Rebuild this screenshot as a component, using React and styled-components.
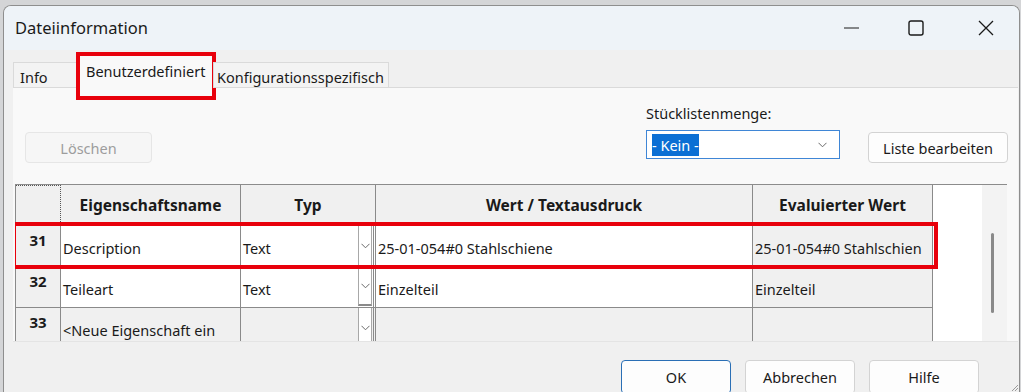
import React from 'react';
import styled, { createGlobalStyle } from 'styled-components';

const GlobalStyle = createGlobalStyle`
  html, body {
    margin: 0;
    padding: 0;
    width: 1021px;
    height: 392px;
    overflow: hidden;
    background: #d4d5d7;
    font-family: "Noto Sans", "Open Sans", sans-serif;
    color: #1a1a1a;
  }
`;

const COLS = [45, 180, 135, 377, 180];
const RED = '#e8000b';
const LINE = '#8a8a8a';

const Screen = styled.div`
  display: flex;
  flex-direction: column;
  width: 1021px;
  height: 392px;
  padding-top: 5px;
  box-sizing: border-box;
`;

const Dialog = styled.div`
  position: relative;
  margin-left: 3px;
  width: 1015px;
  flex: 1;
  border: 1px solid #8e8e8e;
  border-bottom: none;
  border-radius: 8px 8px 0 0;
  background: #f0f0f0;
  display: flex;
  flex-direction: column;
  overflow: hidden;
`;

const TitleBar = styled.div`
  height: 44px;
  flex-shrink: 0;
  background: #eef3f8;
  display: flex;
  align-items: center;
  padding-left: 11px;
`;

const Title = styled.div`
  flex: 1;
  font-size: 16.5px;
  padding-bottom: 2px;
`;

const WinButton = styled.div`
  width: ${p => p.$w}px;
  height: 44px;
  display: flex;
  align-items: center;
  justify-content: center;
`;

const TabStrip = styled.div`
  height: 37px;
  flex-shrink: 0;
  display: flex;
  align-items: flex-end;
  padding-left: 9px;
  position: relative;
  z-index: 2;
`;

const Tab = styled.div`
  position: relative;
  box-sizing: border-box;
  width: ${p => p.$w}px;
  height: ${p => (p.$active ? 33 : 26)}px;
  margin-bottom: -1px;
  margin-left: ${p => p.$ml || 0}px;
  padding: ${p => (p.$active ? '5px 0 0 6px' : '4px 0 0 6px')};
  font-size: 14.5px;
  background: ${p => (p.$active ? '#f9f9f9' : '#f3f3f3')};
  border: 1px solid #dadada;
  border-bottom: ${p => (p.$active ? 'none' : '1px solid #dadada')};
  white-space: nowrap;

  ${p =>
    p.$marked &&
    `
    &::after {
      content: '';
      position: absolute;
      left: -4px;
      top: -4px;
      right: -3px;
      bottom: -12px;
      border: 4px solid ${RED};
    }
  `}
`;

const Panel = styled.div`
  height: 253px;
  flex-shrink: 0;
  background: #f9f9f9;
  border-top: 1px solid #dadada;
  border-bottom: 1px solid #e4e4e4;
  margin: 0 1px 0 9px;
  display: flex;
  flex-direction: column;
  position: relative;
  z-index: 1;
`;

const Controls = styled.div`
  height: 96px;
  flex-shrink: 0;
  box-sizing: border-box;
  display: flex;
  align-items: flex-end;
  padding: 0 10px 21px 12px;
`;

const Button = styled.div`
  box-sizing: border-box;
  width: ${p => p.$w}px;
  height: ${p => p.$h || 31}px;
  display: flex;
  align-items: center;
  justify-content: center;
  font-size: 14.5px;
  border-radius: 4px;
  background: ${p => (p.$disabled ? '#f6f6f6' : '#fdfdfd')};
  border: 1px solid ${p => (p.$primary ? '#2a6fb5' : p.$disabled ? '#e6e6e6' : '#d3d3d3')};
  color: ${p => (p.$disabled ? '#9d9d9d' : '#1a1a1a')};
`;

const Spacer = styled.div`
  flex: 1;
`;

const Field = styled.div`
  display: flex;
  flex-direction: column;
  gap: 7px;
  margin-bottom: 4px;
  margin-right: 28px;
`;

const Label = styled.div`
  font-size: 14.5px;
`;

const Select = styled.div`
  box-sizing: border-box;
  width: 194px;
  height: 29px;
  background: #fff;
  border: 1px solid #3f86d6;
  display: flex;
  align-items: center;
  justify-content: space-between;
  padding: 0 12px 0 5px;
  font-size: 14.5px;
`;

const Highlight = styled.span`
  background: #0b6fd4;
  color: #fff;
  padding: 1px 0;
`;

const GridArea = styled.div`
  margin-left: 2px;
  width: 992px;
  flex: 1;
  overflow: hidden;
  display: flex;
  border-top: 1px solid #8c8c8c;
`;

const Table = styled.div`
  width: 918px;
  display: flex;
  flex-direction: column;
  border-left: 1px solid ${LINE};
  box-sizing: border-box;
`;

const Row = styled.div`
  position: relative;
  display: flex;
  height: 41px;
  flex-shrink: 0;

  ${p =>
    p.$marked &&
    `
    &::after {
      content: '';
      position: absolute;
      left: -4px;
      top: -4px;
      right: -5px;
      bottom: -2px;
      border: 4px solid ${RED};
      z-index: 3;
    }
  `}
`;

const Cell = styled.div`
  box-sizing: border-box;
  position: relative;
  width: ${p => p.$w}px;
  flex-shrink: 0;
  border-right: 1px solid ${LINE};
  border-bottom: 1px solid ${LINE};
  background: ${p => p.$bg || '#fff'};
  display: flex;
  align-items: ${p => (p.$top ? 'flex-start' : 'center')};
  justify-content: ${p => (p.$center ? 'center' : 'flex-start')};
  padding: ${p => (p.$top ? '4px 0 0' : '4px 0 0 2px')};
  font-size: ${p => (p.$bold ? 15 : 14.5)}px;
  font-weight: ${p => (p.$bold ? 700 : 400)};
  white-space: nowrap;
  overflow: hidden;
`;

const HeadCell = styled(Cell)`
  background: #f0f0f0;
  justify-content: center;
  padding: 0 0 1px;
  font-size: 15.5px;
  font-weight: 700;
  ${p => p.$dotted && `border: 1px dotted #555; border-left: none;`}
`;

const DropButton = styled.div`
  position: absolute;
  right: 1px;
  top: 0;
  bottom: ${p => (p.$raised ? 1 : 0)}px;
  width: 14px;
  box-sizing: border-box;
  background: #fff;
  border-left: 1px solid #a8a8a8;
  border-right: 1px solid #a8a8a8;
  ${p => p.$raised && `border-bottom: 2px solid #8a8a8a;`}
  display: flex;
  align-items: center;
  justify-content: center;
`;

const Filler = styled.div`
  width: 49px;
  background: #fff;
`;

const ScrollTrack = styled.div`
  width: 25px;
  background: #f3f3f3;
  padding: 48px 0 0 9px;
  box-sizing: border-box;
`;

const Thumb = styled.div`
  width: 3px;
  height: 80px;
  border-radius: 2px;
  background: #8a8a8a;
`;

const Footer = styled.div`
  flex: 1;
  display: flex;
  justify-content: flex-end;
  gap: 14px;
  padding: 18px 40px 0 0;
`;

const Grip = styled.svg`
  position: absolute;
  right: 0;
  bottom: 0;
`;

const Chevron = ({ size = 9 }) => (
  <svg width={size} height={6} viewBox="0 0 9 6">
    <path d="M0.5 0.8 L4.5 4.8 L8.5 0.8" fill="none" stroke="#6a6a6a" strokeWidth="1" />
  </svg>
);

const rows = [
  { n: '31', name: 'Description', typ: 'Text', wert: '25-01-054#0 Stahlschiene', eval: '25-01-054#0 Stahlschien', marked: true },
  { n: '32', name: 'Teileart', typ: 'Text', wert: 'Einzelteil', eval: 'Einzelteil', raised: true },
  { n: '33', name: '<Neue Eigenschaft ein', typ: '', wert: '', eval: '', fresh: true },
];

export default function App() {
  return (
    <Screen>
      <GlobalStyle />
      <Dialog>
        <TitleBar>
          <Title>Dateiinformation</Title>
          <WinButton $w={56}>
            <svg width="16" height="2" viewBox="0 0 16 2">
              <line x1="0" y1="1" x2="15" y2="1" stroke="#1a1a1a" strokeWidth="1" />
            </svg>
          </WinButton>
          <WinButton $w={73}>
            <svg width="17" height="17" viewBox="0 0 17 17">
              <rect x="1" y="1" width="14" height="14" rx="2" fill="none" stroke="#1a1a1a" strokeWidth="1.4" />
            </svg>
          </WinButton>
          <WinButton $w={66}>
            <svg width="16" height="16" viewBox="0 0 16 16">
              <path d="M1 1 L15 15 M15 1 L1 15" stroke="#1a1a1a" strokeWidth="1.3" />
            </svg>
          </WinButton>
        </TitleBar>

        <TabStrip>
          <Tab $w={66}>Info</Tab>
          <Tab $w={135} $active $marked>Benutzerdefiniert</Tab>
          <Tab $w={176} $ml={-1} style={{ paddingLeft: 3 }}>Konfigurationsspezifisch</Tab>
        </TabStrip>

        <Panel>
          <Controls>
            <Button $w={127} $disabled>Löschen</Button>
            <Spacer />
            <Field>
              <Label>Stücklistenmenge:</Label>
              <Select>
                <Highlight>- Kein -</Highlight>
                <Chevron />
              </Select>
            </Field>
            <Button $w={140}>Liste bearbeiten</Button>
          </Controls>

          <GridArea>
            <Table>
              <Row>
                <HeadCell $w={COLS[0]} $dotted />
                <HeadCell $w={COLS[1]}>Eigenschaftsname</HeadCell>
                <HeadCell $w={COLS[2]}>Typ</HeadCell>
                <HeadCell $w={COLS[3]}>Wert / Textausdruck</HeadCell>
                <HeadCell $w={COLS[4]}>Evaluierter Wert</HeadCell>
              </Row>
              {rows.map(r => (
                <Row key={r.n} $marked={r.marked}>
                  <Cell $w={COLS[0]} $bg="#f0f0f0" $bold $center $top>{r.n}</Cell>
                  <Cell $w={COLS[1]} $bg={r.fresh ? '#f0f0f0' : '#fff'}>{r.name}</Cell>
                  <Cell $w={COLS[2]} $bg={r.fresh ? '#f0f0f0' : '#fff'} style={{ borderRight: `3px double ${LINE}` }}>
                    {r.typ}
                    <DropButton $raised={r.raised}>
                      <Chevron />
                    </DropButton>
                  </Cell>
                  <Cell $w={COLS[3]} $bg={r.fresh ? '#f0f0f0' : '#fff'}>{r.wert}</Cell>
                  <Cell $w={COLS[4]} $bg="#f0f0f0">{r.eval}</Cell>
                </Row>
              ))}
            </Table>
            <Filler />
            <ScrollTrack>
              <Thumb />
            </ScrollTrack>
          </GridArea>
        </Panel>

        <Footer>
          <Button $w={110} $h={34} $primary>OK</Button>
          <Button $w={110} $h={34}>Abbrechen</Button>
          <Button $w={110} $h={34}>Hilfe</Button>
        </Footer>

        <Grip width="9" height="9" viewBox="0 0 9 9">
          <path d="M8 2 L2 8 M8 5 L5 8" stroke="#9a9a9a" strokeWidth="1" />
        </Grip>
      </Dialog>
    </Screen>
  );
}
